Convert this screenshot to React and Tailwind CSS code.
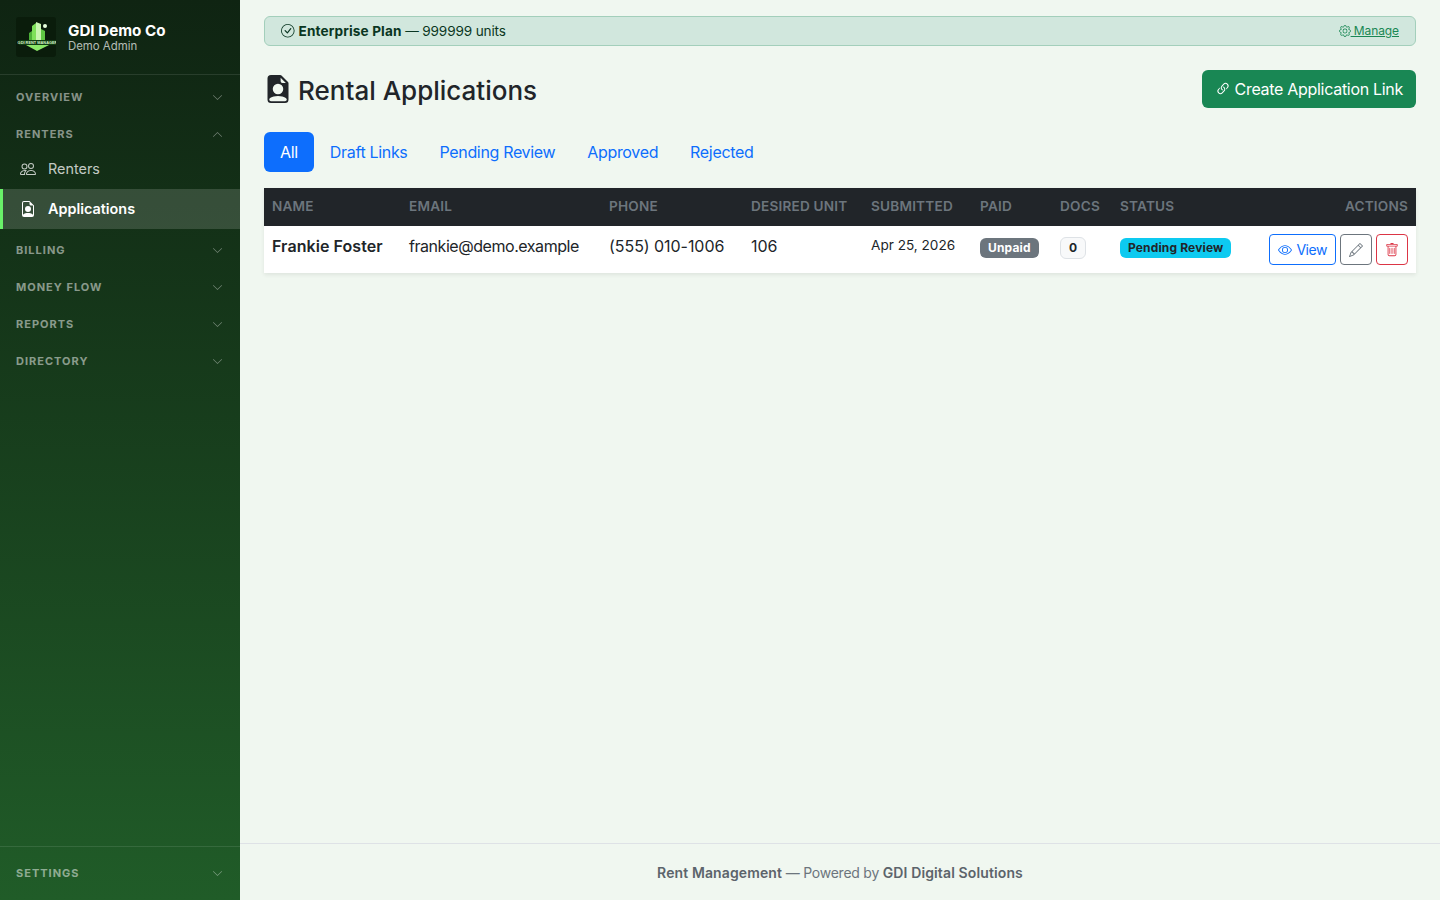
import {
    BsCheckCircle,
    BsChevronDown,
    BsChevronUp,
    BsEye,
    BsFileEarmarkPerson,
    BsFileEarmarkPersonFill,
    BsGear,
    BsLink45Deg,
    BsPencil,
    BsPeople,
    BsTrash,
} from 'react-icons/bs';

const NavGroup = ({ label, open }) => (
    <div className="flex items-center justify-between h-[37px] pl-4 pr-[17px]">
        <span className="text-[11px] font-bold tracking-[1px] text-white/50">{ label }</span>
        { open ? <BsChevronUp className="-mt-[1px] text-[11px] text-white/40" /> : <BsChevronDown className="-mt-[1px] text-[11px] text-white/40" /> }
    </div>
);

const Logo = () => (
    <svg width="40" height="40" viewBox="0 0 40 40" className="shrink-0">
        <rect width="40" height="40" rx="3" fill="#0a1c0b" />
        <path d="M13 23 L13 16 L16 14 L16 23 Z" fill="#4caf38" />
        <path d="M16 23 L16 9 L20 6 L20 23 Z" fill="#7ee05a" />
        <path d="M20 23 L20 5 L25 7 L25 23 Z" fill="#c8f5b0" />
        <path d="M25 23 L25 12 L29 14 L29 23 Z" fill="#5fc743" />
        <circle cx="29" cy="9" r="2" fill="#e8ffe0" />
        <rect x="3" y="23" width="37" height="5" fill="#0f3b10" />
        <text x="21.5" y="27" textAnchor="middle" fontSize="3.9" fontWeight="700" fill="#d8f5c8" fontFamily="'Liberation Sans', sans-serif">GDI RENT MANAGER</text>
        <path d="M10 28 L33 28 L21 34 Z" fill="#8be868" />
    </svg>
);

const App = () => {
    return (
        <div className="flex h-[900px] w-[1440px] overflow-hidden bg-[#f0f7f0] font-['Inter',sans-serif] text-[#212529]">
            <aside className="flex w-[240px] shrink-0 flex-col bg-gradient-to-b from-[#0f2412] to-[#205c28]">
                <div className="flex h-[75px] items-center gap-3 border-b border-white/10 pl-4 pb-[1px]">
                    <Logo />
                    <div className="mt-[2px]">
                        <div className="text-[15.2px] font-bold leading-[17px] text-white">GDI Demo Co</div>
                        <div className="text-[11.4px] leading-[14px] text-white/70">Demo Admin</div>
                    </div>
                </div>
                <nav className="flex flex-1 flex-col pt-1">
                    <NavGroup label="OVERVIEW" />
                    <NavGroup label="RENTERS" open />
                    <div className="-mt-1">
                        <a className="flex h-[40px] items-center gap-3 pl-5 text-[14.4px] text-white/75" href="#renters">
                            <BsPeople className="text-base" />
                            <span>Renters</span>
                        </a>
                        <a className="flex h-[40px] items-center gap-3 border-l-[3px] border-[#69f069] bg-white/15 pl-[17px] text-[14.4px] font-semibold text-white" href="#applications">
                            <BsFileEarmarkPerson className="text-base" />
                            <span>Applications</span>
                        </a>
                    </div>
                    <div className="h-[3px]"></div>
                    <NavGroup label="BILLING" />
                    <NavGroup label="MONEY FLOW" />
                    <NavGroup label="REPORTS" />
                    <NavGroup label="DIRECTORY" />
                </nav>
                <div className="flex h-[54px] flex-col justify-center border-t border-white/10">
                    <NavGroup label="SETTINGS" />
                </div>
            </aside>

            <div className="flex min-w-0 flex-1 flex-col">
                <main className="flex-1 px-6 pt-4">
                    <div className="flex h-[30px] items-center justify-between rounded-md border border-[#a3cfbb] bg-[#d1e7dd] pl-4 pr-4 text-[13.6px] text-[#0a3622]">
                        <div className="flex items-center gap-1">
                            <BsCheckCircle className="text-[13.6px]" />
                            <span className="tracking-[-0.15px]"><strong className="font-bold tracking-[0.13px]">Enterprise Plan</strong> — 999999 units</span>
                        </div>
                        <a className="text-[12px] tracking-[-0.1px] text-[#198754] underline" href="#manage">
                            <BsGear className="inline align-[-2px]" /> Manage
                        </a>
                    </div>

                    <div className="mt-6 flex h-[38px] items-center justify-between">
                        <h1 className="flex items-center gap-[6px] text-[26px] font-medium leading-[34px]">
                            <BsFileEarmarkPersonFill className="text-[28px]" />
                            <span className="mt-[3px]">Rental Applications</span>
                        </h1>
                        <button className="flex h-[38px] items-center gap-1 rounded-md bg-[#198754] px-[13px] text-base tracking-[-0.3px] text-white">
                            <BsLink45Deg className="text-base" />
                            Create Application Link
                        </button>
                    </div>

                    <div className="mt-6 flex text-base tracking-[-0.33px] text-[#0d6efd]">
                        <a className="rounded-md bg-[#0d6efd] px-4 py-2 text-white" href="#all">All</a>
                        <a className="px-4 py-2" href="#draft">Draft Links</a>
                        <a className="px-4 py-2" href="#pending">Pending Review</a>
                        <a className="px-4 py-2" href="#approved">Approved</a>
                        <a className="px-4 py-2" href="#rejected">Rejected</a>
                    </div>

                    <table className="mt-4 w-full border-collapse bg-white shadow-[0_2px_4px_rgba(0,0,0,0.075)]">
                        <thead className="bg-[#212529]">
                            <tr className="h-[38px] text-left text-[13.6px] tracking-[0.2px] text-[#6c757d]">
                                <th className="w-[137px] px-2 pb-[2px] font-semibold">NAME</th>
                                <th className="w-[200px] px-2 pb-[2px] font-semibold">EMAIL</th>
                                <th className="w-[142px] px-2 pb-[2px] font-semibold">PHONE</th>
                                <th className="w-[120px] px-2 pb-[2px] font-semibold">DESIRED UNIT</th>
                                <th className="w-[109px] px-2 pb-[2px] font-semibold">SUBMITTED</th>
                                <th className="w-[80px] px-2 pb-[2px] font-semibold">PAID</th>
                                <th className="w-[60px] px-2 pb-[2px] font-semibold">DOCS</th>
                                <th className="w-[140px] px-2 pb-[2px] font-semibold">STATUS</th>
                                <th className="px-2 pb-[2px] text-right font-semibold">ACTIONS</th>
                            </tr>
                        </thead>
                        <tbody>
                            <tr className="h-[47px] align-top text-base">
                                <td className="px-2 pt-2 font-semibold tracking-[0.07px]">Frankie Foster</td>
                                <td className="px-2 pt-2 tracking-[-0.45px]">frankie@demo.example</td>
                                <td className="px-2 pt-2 tracking-[-0.05px]">(555) 010-1006</td>
                                <td className="px-2 pt-2">106</td>
                                <td className="px-2 pt-[9px] text-[13.6px]">Apr 25, 2026</td>
                                <td className="px-2 pt-[12px]">
                                    <span className="block w-fit rounded-md bg-[#6c757d] px-2 py-[3px] text-[12px] font-bold leading-[14px] tracking-[0.15px] text-white">Unpaid</span>
                                </td>
                                <td className="px-2 pt-[11px]">
                                    <span className="block w-fit rounded-md border border-[#dee2e6] bg-[#f8f9fa] px-2 py-[3px] text-[12px] font-bold leading-[14px] text-[#212529]">0</span>
                                </td>
                                <td className="px-2 pt-[12px]">
                                    <span className="block w-fit rounded-md bg-[#0dcaf0] px-2 py-[3px] text-[12px] font-bold leading-[14px] tracking-[0.15px] text-[#212529]">Pending Review</span>
                                </td>
                                <td className="px-2 pt-2">
                                    <div className="flex justify-end gap-1">
                                        <button className="flex h-[31px] items-center gap-1 rounded-[4px] border border-[#0d6efd] px-2 text-sm tracking-[-0.45px] text-[#0d6efd]">
                                            <BsEye />
                                            View
                                        </button>
                                        <button className="flex h-[31px] w-[32px] items-center justify-center rounded-[4px] border border-[#6c757d] text-sm text-[#6c757d]">
                                            <BsPencil />
                                        </button>
                                        <button className="flex h-[31px] w-[32px] items-center justify-center rounded-[4px] border border-[#dc3545] text-sm text-[#dc3545]">
                                            <BsTrash />
                                        </button>
                                    </div>
                                </td>
                            </tr>
                        </tbody>
                    </table>
                </main>

                <footer className="flex h-[57px] items-center justify-center border-t border-[#dee2e6] pt-[1px] text-sm tracking-[-0.25px] text-[#6c757d]">
                    <span><strong className="font-semibold tracking-[0.12px] text-[#5c646b]">Rent Management</strong> — Powered by <strong className="font-semibold tracking-[0.12px] text-[#5c646b]">GDI Digital Solutions</strong></span>
                </footer>
            </div>
        </div>
    );
};

export default App;
